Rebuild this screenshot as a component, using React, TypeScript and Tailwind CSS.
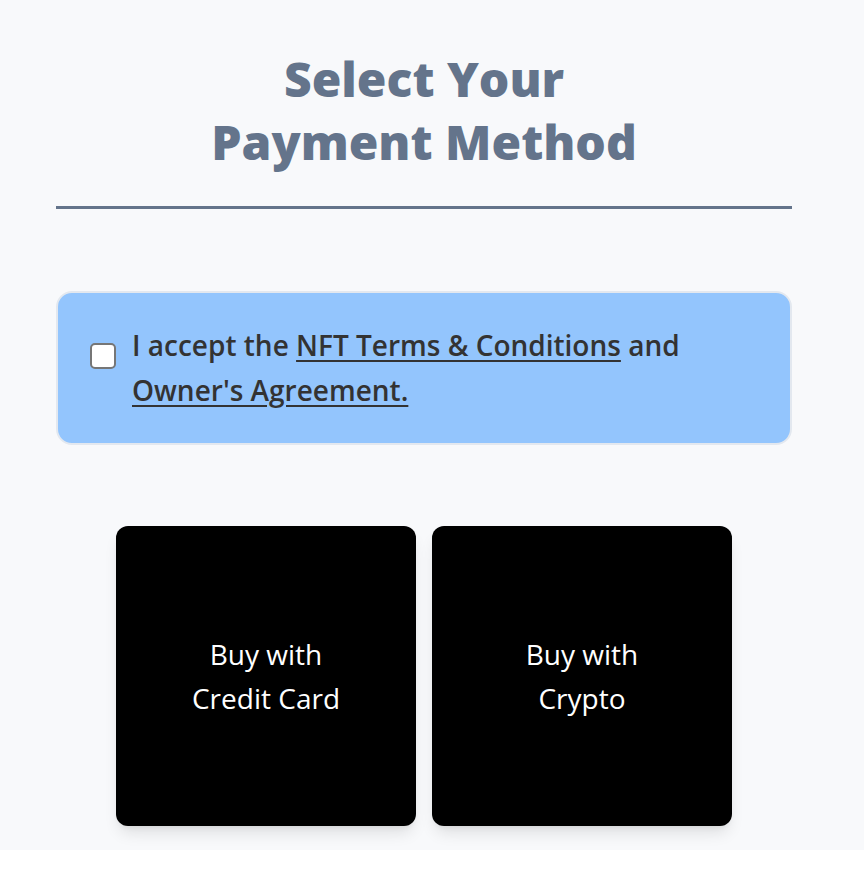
export default function App() {
  return (
    <div className="min-h-[850px] bg-[#f8f9fb]" style={{ fontFamily: '"Open Sans", sans-serif' }}>
      <div className="ml-[56px] w-[736px] pt-[47px] pb-6">
        <h1 className="text-center text-[48px] leading-[63px] font-extrabold text-[#64748b]">
          Select Your
          <br />
          Payment Method
        </h1>
        <div className="mt-[33px] h-[3px] bg-[#64748b]" />

        <div className="mt-[82px] flex items-start gap-4 rounded-2xl border-2 border-[#e3e8ef] bg-[#93c5fd] px-[32px] py-[30px]">
          <input
            type="checkbox"
            className="mt-[20px] h-[26px] w-[26px] shrink-0 appearance-none rounded-[5px] border-2 border-[#767676] bg-white"
          />
          <p className="text-[28px] leading-[45px] font-semibold text-[#333]">
            I accept the <a className="underline underline-offset-4">NFT Terms &amp; Conditions</a> and{' '}
            <a className="underline underline-offset-4">Owner's Agreement.</a>
          </p>
        </div>

        <div className="mt-[81px] flex justify-center gap-4">
          <button className="flex h-[300px] w-[300px] items-center justify-center rounded-xl bg-black text-[28px] leading-[44px] text-white shadow-lg">
            Buy with
            <br />
            Credit Card
          </button>
          <button className="flex h-[300px] w-[300px] items-center justify-center rounded-xl bg-black text-[28px] leading-[44px] text-white shadow-lg">
            Buy with
            <br />
            Crypto
          </button>
        </div>
      </div>
    </div>
  )
}
